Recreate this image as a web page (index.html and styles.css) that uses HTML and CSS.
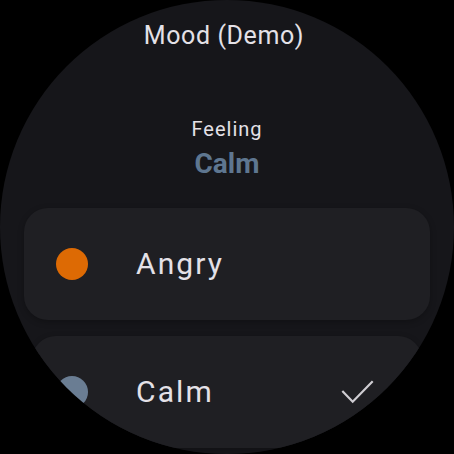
FILE: index.html
```html
<!DOCTYPE html>
<html>
<head>
<meta charset="utf-8">
<link rel="stylesheet" href="styles.css">
</head>
<body>
<div class="watch">
  <div class="title">Mood (Demo)</div>
  <div class="header">
    <div class="label">Feeling</div>
    <div class="value">Calm</div>
  </div>
  <div class="list">
    <div class="card">
      <span class="dot dot-angry"></span>
      <span class="name">Angry</span>
    </div>
    <div class="card card-second">
      <span class="dot dot-calm"></span>
      <span class="name">Calm</span>
      <svg class="check" width="36" height="28" viewBox="0 0 36 28">
        <polyline points="2.3,13 12.7,23.7 32.7,3.3" fill="none" stroke="#cfcdd2" stroke-width="2.2"/>
      </svg>
    </div>
  </div>
</div>
</body>
</html>
```

FILE: styles.css
```css
html, body {
  margin: 0;
  padding: 0;
  background: #000;
}
body {
  width: 454px;
  height: 454px;
  overflow: hidden;
  font-family: Roboto, "Noto Sans", sans-serif;
}
.watch {
  width: 454px;
  height: 454px;
  border-radius: 50%;
  overflow: hidden;
  background: #16161a;
  display: flex;
  flex-direction: column;
  align-items: stretch;
  color: #e4e1e7;
}
.title {
  padding-top: 21px;
  padding-right: 6px;
  font-size: 25px;
  line-height: 30px;
  text-align: center;
  letter-spacing: 0.6px;
}
.header {
  margin-top: 66px;
  display: flex;
  flex-direction: column;
  align-items: center;
  gap: 6px;
}
.label {
  font-size: 20px;
  line-height: 24px;
  letter-spacing: 1px;
}
.value {
  font-size: 28px;
  line-height: 34px;
  font-weight: 700;
  color: #5e7690;
}
.list {
  margin-top: 27px;
  display: flex;
  flex-direction: column;
  gap: 16px;
}
.card {
  margin: 0 24px;
  height: 112px;
  border-radius: 24px;
  background: #1f1f23;
  display: flex;
  align-items: center;
  padding-left: 32px;
  box-shadow: 0 2px 6px rgba(0,0,0,0.25);
}
.card-second {
  margin: 0 32px;
  padding-left: 24px;
  padding-right: 46px;
}
.dot {
  width: 32px;
  height: 32px;
  border-radius: 50%;
  flex: none;
}
.dot-angry { background: #dd6a04; }
.dot-calm { background: #6a7d93; }
.name {
  margin-left: 48px;
  font-size: 30px;
  line-height: 36px;
  letter-spacing: 2.1px;
}
.check {
  margin-left: auto;
  flex: none;
}
```
